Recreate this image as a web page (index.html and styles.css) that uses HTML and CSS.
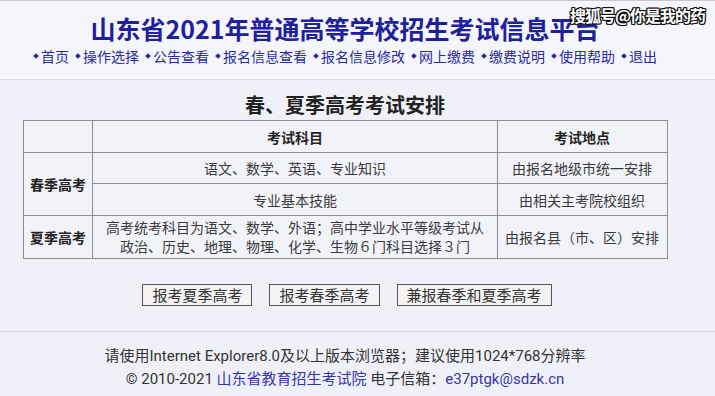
FILE: index.html
```html
<!DOCTYPE html>
<html lang="zh-CN">
<head>
<meta charset="utf-8">
<title>山东省2021年普通高等学校招生考试信息平台</title>
<link rel="stylesheet" href="styles.css">
</head>
<body>
<div class="header">
  <div class="wrap">
    <h1 class="title">山东省2021年普通高等学校招生考试信息平台</h1>
    <nav class="nav">
      <a class="nav-item">首页</a>
      <a class="nav-item">操作选择</a>
      <a class="nav-item">公告查看</a>
      <a class="nav-item">报名信息查看</a>
      <a class="nav-item">报名信息修改</a>
      <a class="nav-item">网上缴费</a>
      <a class="nav-item">缴费说明</a>
      <a class="nav-item">使用帮助</a>
      <a class="nav-item">退出</a>
    </nav>
  </div>
  <div class="watermark">搜狐号@你是我的药</div>
</div>
<div class="main">
  <div class="wrap">
    <h2 class="sub-title">春、夏季高考考试安排</h2>
    <table class="plan">
      <colgroup><col class="c1"><col class="c2"><col class="c3"></colgroup>
      <tr class="r-head"><th></th><th>考试科目</th><th>考试地点</th></tr>
      <tr class="r1"><th rowspan="2">春季高考</th><td>语文、数学、英语、专业知识</td><td>由报名地级市统一安排</td></tr>
      <tr class="r2"><td>专业基本技能</td><td>由相关主考院校组织</td></tr>
      <tr class="r3"><th>夏季高考</th><td class="multi">高考统考科目为语文、数学、外语；高中学业水平等级考试从<br>政治、历史、地理、物理、化学、生物６门科目选择３门</td><td>由报名县（市、区）安排</td></tr>
    </table>
    <div class="actions">
      <button class="btn">报考夏季高考</button>
      <button class="btn">报考春季高考</button>
      <button class="btn">兼报春季和夏季高考</button>
    </div>
  </div>
</div>
<div class="footer">
  <div class="wrap">
    <p class="foot-line">请使用Internet Explorer8.0及以上版本浏览器；建议使用1024*768分辨率</p>
    <p class="foot-line">© 2010-2021 <a class="link">山东省教育招生考试院</a> 电子信箱：<a class="link">e37ptgk@sdzk.cn</a></p>
  </div>
</div>
</body>
</html>
```

FILE: styles.css
```css
html, body {
  margin: 0;
  padding: 0;
}
body {
  background: #f0f1f8;
  font-family: "Noto Sans CJK SC", "Noto Sans", sans-serif;
  color: #333;
  height: 396px;
  overflow: hidden;
}
.wrap {
  width: 690px;
}
.header {
  position: relative;
  background: #f5f6fc;
  border-top: 1px solid #c9c9cf;
  border-bottom: 1px solid #dcdde6;
  padding: 10px 0 12px;
}
.title {
  margin: 0;
  text-align: center;
  font-size: 25px;
  line-height: 34px;
  font-weight: 700;
  color: #20209c;
}
.nav {
  display: flex;
  justify-content: center;
  gap: 6px;
  font-size: 14px;
  line-height: 22px;
  color: #2a2aa2;
}
.nav-item {
  display: inline-flex;
  align-items: center;
}
.nav-item::before {
  content: "";
  width: 4px;
  height: 4px;
  background: #2a2aa2;
  transform: rotate(45deg);
  margin: 0 3px 0 1px;
}
.watermark {
  position: absolute;
  top: 3px;
  right: 10px;
  font-size: 16px;
  font-weight: 700;
  line-height: 22px;
  color: #fff;
  letter-spacing: -1px;
  text-shadow: -1px -1px 0 #111, 1px -1px 0 #111, -1px 1px 0 #111, 1px 1px 0 #111, 0 1px 0 #111, 0 -1px 0 #111, 1px 0 0 #111, -1px 0 0 #111;
}
.main {
  padding-top: 10px;
  padding-bottom: 25px;
  border-bottom: 1px solid #d9dae2;
}
.sub-title {
  margin: 0;
  text-align: center;
  font-size: 20px;
  line-height: 30px;
  font-weight: 700;
  color: #222;
}
.plan {
  margin: 0 auto;
  width: 645px;
  border-collapse: collapse;
  font-size: 14px;
  color: #3a3a3a;
  background: #f2f3f9;
}
.plan .c1 { width: 70px; }
.plan .c2 { width: 405px; }
.plan .c3 { width: 170px; }
.plan th, .plan td {
  border: 1px solid #8c8c94;
  padding: 0 4px;
  text-align: center;
  font-weight: 400;
}
.plan th {
  font-weight: 700;
  color: #222;
}
.r-head { height: 32px; }
.r1 { height: 31px; }
.r2 { height: 32px; }
.r3 { height: 43px; }
.multi {
  line-height: 19px;
}
.actions {
  display: flex;
  justify-content: center;
  gap: 17px;
  margin-top: 25px;
  padding-left: 4px;
}
.btn {
  height: 22px;
  padding: 0 9px;
  font-family: "Noto Sans CJK SC", sans-serif;
  font-size: 15px;
  line-height: 20px;
  color: #333;
  background: #f3f3f3;
  border: 1px solid #555;
  border-radius: 0;
}
.footer {
  padding-top: 13px;
}
.foot-line {
  margin: 0;
  text-align: center;
  font-family: "Roboto", "Noto Sans CJK SC", sans-serif;
  font-size: 15px;
  line-height: 23px;
  color: #333;
}
.link {
  color: #3434ae;
}
```
